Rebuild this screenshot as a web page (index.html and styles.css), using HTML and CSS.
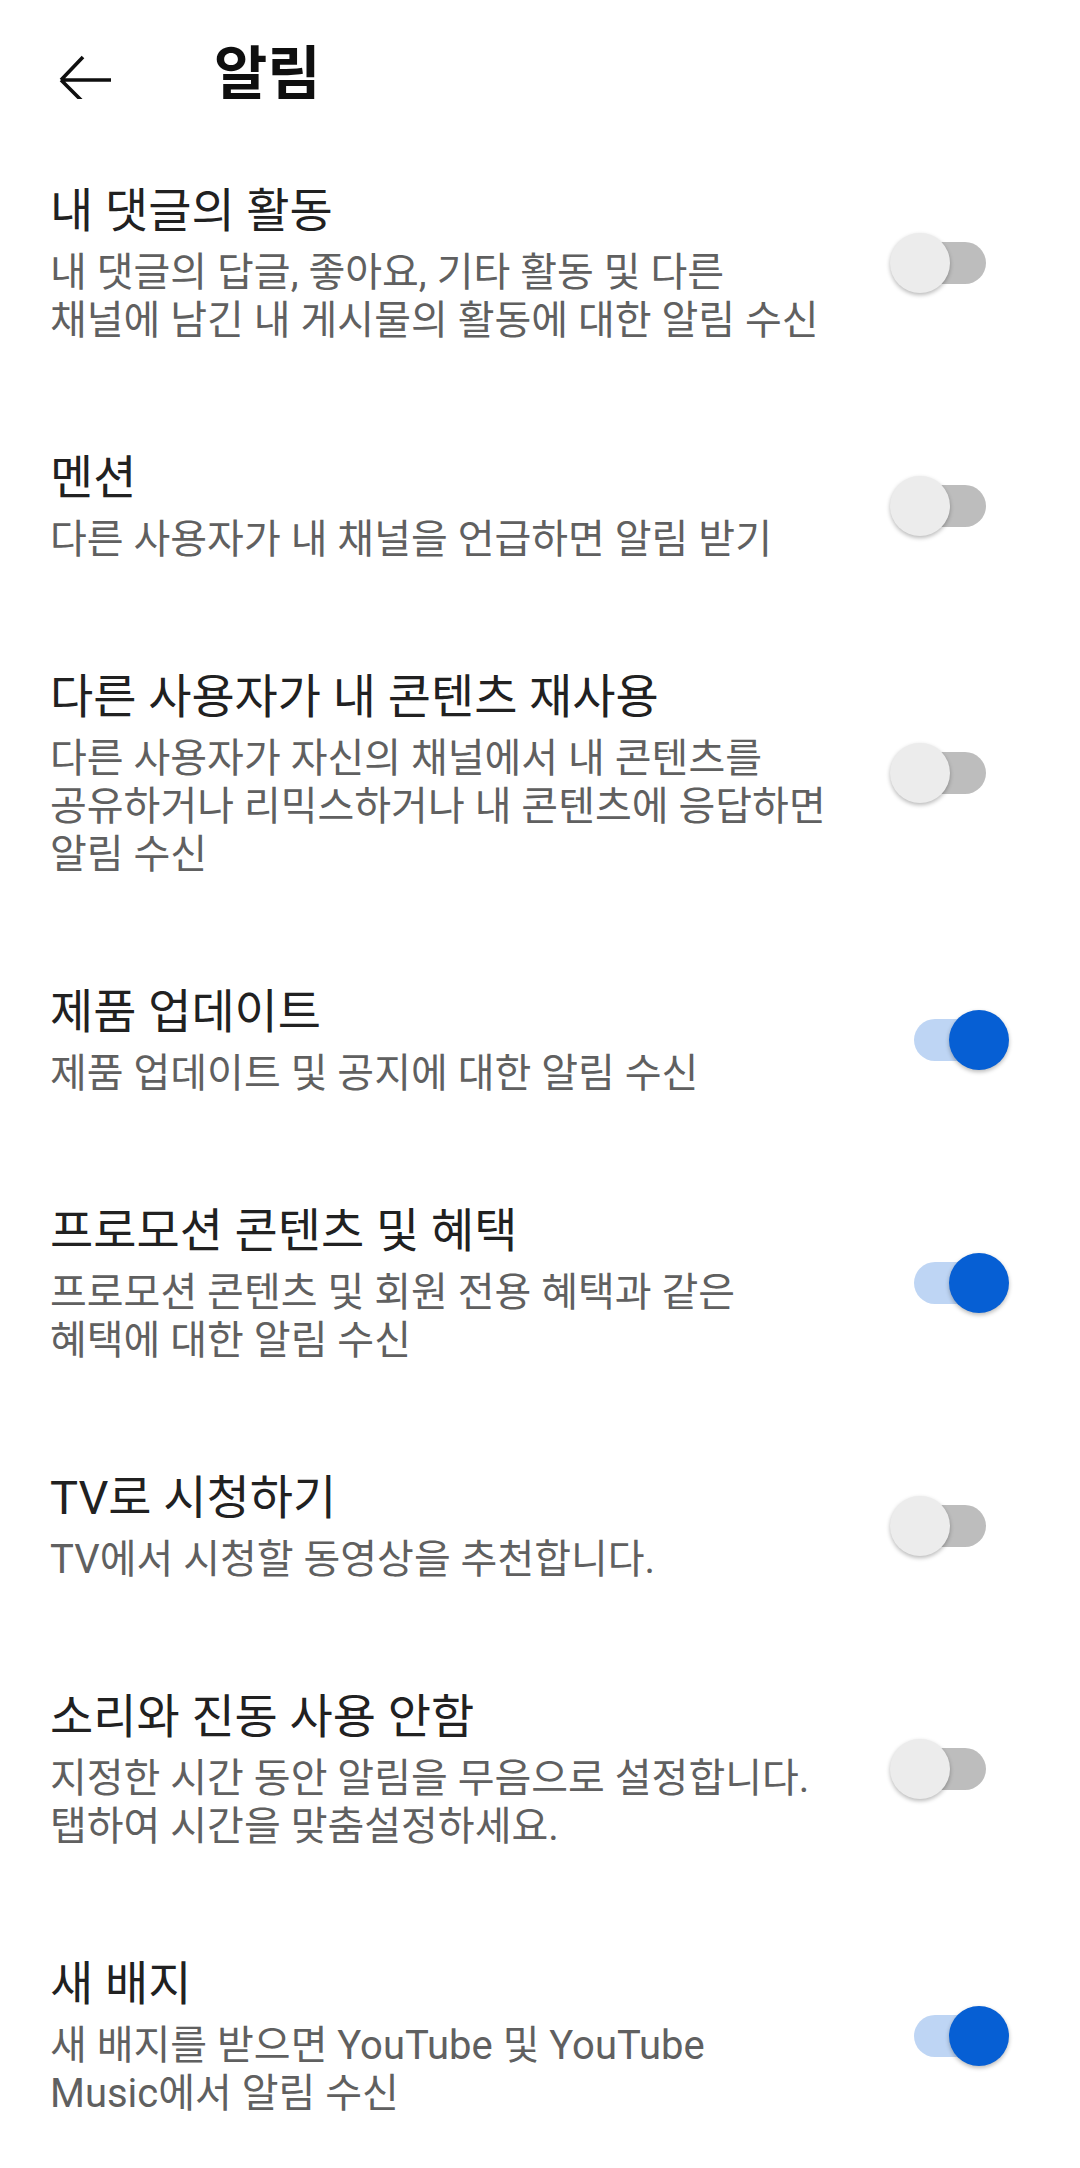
FILE: index.html
```html
<!DOCTYPE html>
<html lang="ko">
<head>
    <meta charset="UTF-8">
    <meta name="viewport" content="width=device-width, initial-scale=1.0">
    <title>알림</title>
    <link rel="stylesheet" href="styles.css">
</head>
<body>
    <div class="header">
        <svg class="back" viewBox="0 0 60 60" width="60" height="60">
            <path d="M55 41H5M5 41L27 18M5 41L27 63" fill="none" stroke="#0f0f0f" stroke-width="3.6"/>
        </svg>
        <h1>알림</h1>
    </div>

    <div class="list">
        <div class="row">
            <div class="text">
                <div class="title">내 댓글의 활동</div>
                <div class="desc">내 댓글의 답글, 좋아요, 기타 활동 및 다른 채널에 남긴 내 게시물의 활동에 대한 알림 수신</div>
            </div>
            <div class="switch"></div>
        </div>
        <div class="row">
            <div class="text">
                <div class="title">멘션</div>
                <div class="desc">다른 사용자가 내 채널을 언급하면 알림 받기</div>
            </div>
            <div class="switch"></div>
        </div>
        <div class="row">
            <div class="text">
                <div class="title">다른 사용자가 내 콘텐츠 재사용</div>
                <div class="desc">다른 사용자가 자신의 채널에서 내 콘텐츠를 공유하거나 리믹스하거나 내 콘텐츠에 응답하면 알림 수신</div>
            </div>
            <div class="switch"></div>
        </div>
        <div class="row">
            <div class="text">
                <div class="title">제품 업데이트</div>
                <div class="desc">제품 업데이트 및 공지에 대한 알림 수신</div>
            </div>
            <div class="switch on"></div>
        </div>
        <div class="row">
            <div class="text">
                <div class="title">프로모션 콘텐츠 및 혜택</div>
                <div class="desc">프로모션 콘텐츠 및 회원 전용 혜택과 같은 혜택에 대한 알림 수신</div>
            </div>
            <div class="switch on"></div>
        </div>
        <div class="row">
            <div class="text">
                <div class="title">TV로 시청하기</div>
                <div class="desc">TV에서 시청할 동영상을 추천합니다.</div>
            </div>
            <div class="switch"></div>
        </div>
        <div class="row">
            <div class="text">
                <div class="title">소리와 진동 사용 안함</div>
                <div class="desc">지정한 시간 동안 알림을 무음으로 설정합니다. 탭하여 시간을 맞춤설정하세요.</div>
            </div>
            <div class="switch"></div>
        </div>
        <div class="row">
            <div class="text">
                <div class="title">새 배지</div>
                <div class="desc">새 배지를 받으면 YouTube 및 YouTube Music에서 알림 수신</div>
            </div>
            <div class="switch on"></div>
        </div>
    </div>
</body>
</html>
```

FILE: styles.css
```css
body {
    margin: 0;
    background: #ffffff;
    color: #212121;
    font-family: 'Roboto', 'Noto Sans CJK KR', sans-serif;
    overflow: hidden;
}
.header {
    display: flex;
    align-items: center;
    height: 120px;
    padding-top: 9px;
}
.back {
    margin-left: 56px;
    flex: none;
}
h1 {
    margin: 0 0 0 98px;
    font-size: 58px;
    font-weight: 700;
    color: #0f0f0f;
}
.row {
    display: flex;
    align-items: center;
    gap: 55px;
    padding: 51.5px 70px 51.5px 50px;
}
.text {
    flex: 1;
    word-break: keep-all;
}
.title {
    font-size: 47px;
    line-height: 60px;
    color: #212121;
}
.desc {
    margin-top: 8px;
    font-size: 40px;
    line-height: 48px;
    color: #606060;
}
.switch {
    flex: none;
    position: relative;
    width: 72px;
    height: 42px;
    margin: 0 24px;
    border-radius: 21px;
    background: #bdbdbd;
}
.switch::after {
    content: '';
    position: absolute;
    top: -9px;
    left: -24px;
    width: 60px;
    height: 60px;
    border-radius: 50%;
    background: #ececec;
    box-shadow: 0 2px 4px rgba(0, 0, 0, 0.28);
}
.switch.on {
    background: #bed5f4;
}
.switch.on::after {
    left: 35px;
    background: #065fd4;
}
```
